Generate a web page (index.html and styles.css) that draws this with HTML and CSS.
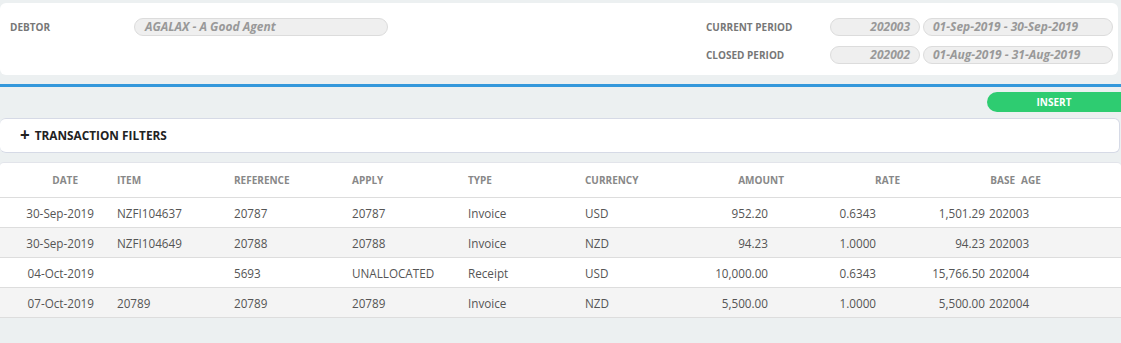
FILE: index.html
```html
<!DOCTYPE html>
<html lang="en">
<head>
    <meta charset="UTF-8">
    <title>Debtor Transactions</title>
    <link rel="stylesheet" href="styles.css">
</head>
<body>

<div class="page">
    <section class="header-card">
        <div class="field-group">
            <label class="field-label">DEBTOR</label>
            <div class="pill pill-debtor">AGALAX - A Good Agent</div>
        </div>
        <div class="field-group period-group">
            <label class="field-label">CURRENT PERIOD</label>
            <div class="pill pill-period">202003</div>
            <div class="pill pill-range">01-Sep-2019 - 30-Sep-2019</div>

            <label class="field-label">CLOSED PERIOD</label>
            <div class="pill pill-period">202002</div>
            <div class="pill pill-range">01-Aug-2019 - 31-Aug-2019</div>
        </div>
    </section>

    <div class="divider"></div>

    <div class="actions">
        <button class="btn-insert" type="button">INSERT</button>
    </div>

    <div class="filters-card">
        <span class="plus">+</span> TRANSACTION FILTERS
    </div>

    <div class="table-card">
        <table class="txn-table">
            <colgroup>
                <col style="width:117px">
                <col style="width:117px">
                <col style="width:118px">
                <col style="width:116px">
                <col style="width:117px">
                <col style="width:117px">
                <col style="width:98px">
                <col style="width:116px">
                <col style="width:101px">
                <col>
            </colgroup>
            <thead>
                <tr>
                    <th class="c-date">DATE</th>
                    <th>ITEM</th>
                    <th>REFERENCE</th>
                    <th>APPLY</th>
                    <th>TYPE</th>
                    <th>CURRENCY</th>
                    <th class="num">AMOUNT</th>
                    <th class="num">RATE</th>
                    <th class="num c-base">BASE</th>
                    <th class="c-age">AGE</th>
                </tr>
            </thead>
            <tbody id="rows"></tbody>
        </table>
    </div>
</div>

<script>
    const transactions = [
        ['30-Sep-2019', 'NZFI104637', '20787', '20787', 'Invoice', 'USD', '952.20', '0.6343', '1,501.29', '202003'],
        ['30-Sep-2019', 'NZFI104649', '20788', '20788', 'Invoice', 'NZD', '94.23', '1.0000', '94.23', '202003'],
        ['04-Oct-2019', '', '5693', 'UNALLOCATED', 'Receipt', 'USD', '10,000.00', '0.6343', '15,766.50', '202004'],
        ['07-Oct-2019', '20789', '20789', '20789', 'Invoice', 'NZD', '5,500.00', '1.0000', '5,500.00', '202004']
    ];

    const classes = ['c-date', '', '', '', '', '', 'num c-amount', 'num c-rate', 'num c-base', 'c-age'];

    document.getElementById('rows').innerHTML = transactions.map(row => `
        <tr>
            ${row.map((value, i) => `<td class="${classes[i]}">${value}</td>`).join('')}
        </tr>
    `).join('');
</script>

</body>
</html>
```

FILE: styles.css
```css
body {
    margin: 0;
    padding: 0;
    background-color: #ecf0f1;
    font-family: "Open Sans", "Noto Sans", sans-serif;
    color: #555;
}
.page {
    padding-top: 3px;
}
.header-card {
    background-color: #fff;
    border-radius: 6px;
    margin-right: 3px;
    height: 72px;
    box-sizing: border-box;
    padding: 15px 5px 0 10px;
    display: flex;
    justify-content: space-between;
    align-items: flex-start;
}
.field-group {
    display: grid;
    grid-template-columns: 124px 254px;
    align-items: center;
}
.period-group {
    grid-template-columns: 121px 90px 190px;
    column-gap: 3px;
    row-gap: 10px;
}
.field-label {
    font-size: 10px;
    font-weight: bold;
    color: #777;
}
.pill {
    height: 18px;
    box-sizing: border-box;
    border: 1px solid #dcdcdc;
    border-radius: 9px;
    background-color: #efefef;
    font-size: 12px;
    font-weight: bold;
    font-style: italic;
    color: #999;
    line-height: 16px;
    white-space: nowrap;
}
.pill-debtor {
    padding-left: 10px;
}
.pill-period {
    text-align: right;
    padding-right: 9px;
}
.pill-range {
    padding-left: 9px;
}
.divider {
    height: 3px;
    background-color: #3498db;
    margin-top: 9px;
}
.actions {
    display: flex;
    justify-content: flex-end;
    padding-top: 5px;
}
.btn-insert {
    width: 134px;
    height: 20px;
    border: none;
    border-radius: 10px 0 0 10px;
    background-color: #2ecc71;
    color: #fff;
    font-family: inherit;
    font-size: 10px;
    font-weight: bold;
    cursor: pointer;
    padding: 0 0 1px;
}
.filters-card {
    margin: 6px 1px 0 0;
    height: 35px;
    box-sizing: border-box;
    background-color: #fff;
    border: 1px solid #d6dae6;
    border-left: none;
    border-radius: 6px;
    padding: 0 0 2px 20px;
    display: flex;
    align-items: center;
    font-size: 11.8px;
    font-weight: bold;
    color: #222;
}
.plus {
    font-size: 17px;
    line-height: 1;
    margin-right: 5px;
}
.table-card {
    margin-top: 9px;
    background-color: #fff;
    border-top: 1px solid #e2e4ea;
    border-radius: 4px 4px 0 0;
}
.txn-table {
    width: 100%;
    border-collapse: collapse;
    table-layout: fixed;
}
.txn-table th {
    height: 33px;
    font-size: 10px;
    font-weight: bold;
    color: #888;
    text-align: left;
    padding: 0 0 1px;
    border-bottom: 1px solid #ddd;
}
.txn-table td {
    height: 29px;
    padding: 0;
    font-size: 11.7px;
    color: #555;
    border-bottom: 1px solid #ddd;
    white-space: nowrap;
}
.txn-table tbody tr:nth-child(even) {
    background-color: #f4f4f4;
}
.txn-table .num {
    text-align: right;
}
.txn-table th.c-date {
    text-align: right;
    padding-right: 39px;
}
.txn-table td.c-date {
    text-align: right;
    padding-right: 23px;
}
.txn-table th.num {
    padding-right: 16px;
}
.txn-table td.c-amount {
    padding-right: 32px;
}
.txn-table td.c-rate {
    padding-right: 40px;
}
.txn-table th.c-base {
    padding-right: 2px;
}
.txn-table td.c-base {
    padding-right: 32px;
}
.txn-table th.c-age {
    padding-left: 4px;
}
.txn-table td.c-age {
    text-indent: -28px;
}
```
